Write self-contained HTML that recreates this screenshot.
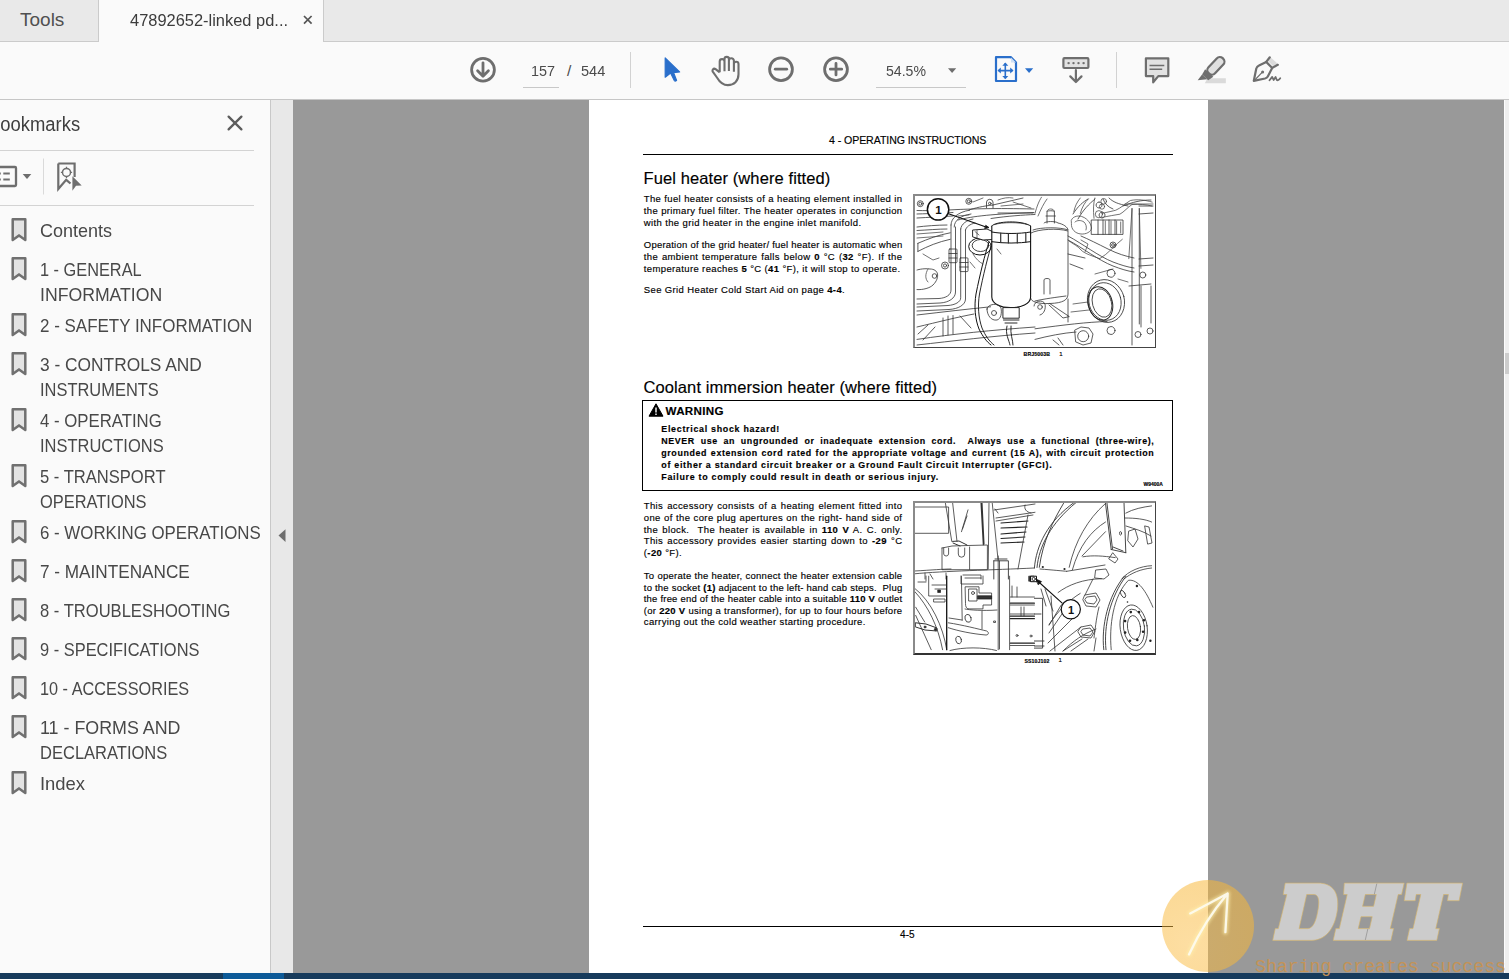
<!DOCTYPE html>
<html><head><meta charset="utf-8">
<style>
*{box-sizing:border-box;margin:0;padding:0}
html,body{width:1509px;height:979px;overflow:hidden;background:#999;font-family:"Liberation Sans",sans-serif}
.a{position:absolute}
#tabbar{left:0;top:0;width:1509px;height:42px;background:#e9e9e9;border-bottom:1px solid #cbcbcb}
#tools{left:0;top:0;width:99px;height:42px;border-right:1px solid #cbcbcb;border-bottom:1px solid #cbcbcb;background:#e9e9e9}
#tab{left:99px;top:0;width:225px;height:42px;background:#fafafa;border-right:1px solid #cbcbcb}
#toolbar{left:0;top:42px;width:1509px;height:58px;background:#fafafa;border-bottom:1px solid #c6c6c6}
#panel{left:0;top:100px;width:271px;height:873px;background:#fafafa;border-right:1px solid #c8c8c8}
#strip{left:271px;top:100px;width:22px;height:873px;background:#e8e8e8}
#doc{left:293px;top:100px;width:1211px;height:873px;background:#999}
#vscroll{left:1504px;top:100px;width:5px;height:873px;background:#efefef;border-left:1px solid #fdfdfd}
#taskbar{left:0;top:973px;width:1509px;height:6px;background:#173b5c}
#page{left:589px;top:100px;width:619px;height:873px;background:#fff}
.ui{color:#4b4b4b;font-family:"Liberation Sans",sans-serif;white-space:nowrap}
.bm{position:absolute;left:40px;font-size:17.7px;color:#484848;line-height:normal;white-space:nowrap;transform-origin:0 0}
.bmi{position:absolute;left:11px;width:16px;height:24px}
.pt{position:absolute;font-family:"Liberation Sans",sans-serif;color:#000;white-space:nowrap;-webkit-text-stroke:0.15px #000}
</style></head>
<body>
<div id="tabbar" class="a"></div>
<div id="tools" class="a"><span class="a ui" style="left:20px;top:8.6px;font-size:19px;color:#505050">Tools</span></div>
<div id="tab" class="a"><span class="a ui" style="left:31px;top:10.8px;font-size:16.6px;color:#3c3c3c;transform:scaleX(0.99);transform-origin:0 0">47892652-linked pd...</span>
<svg class="a" style="left:203.5px;top:14.8px" width="10" height="10" viewBox="0 0 10 10"><path d="M1 1L8.6 8.6M8.6 1L1 8.6" stroke="#555" stroke-width="1.7"/></svg></div>
<div id="toolbar" class="a"></div>
<span class="a ui" style="left:531px;top:62px;font-size:15.5px;color:#4b4b4b;transform:scaleX(0.93);transform-origin:0 0">157</span>
<span class="a ui" style="left:567px;top:62px;font-size:15.5px;color:#4b4b4b">/</span>
<span class="a ui" style="left:581.3px;top:62px;font-size:15.5px;color:#4b4b4b;transform:scaleX(0.94);transform-origin:0 0">544</span>
<span class="a ui" style="left:886px;top:62px;font-size:15.5px;color:#4b4b4b;transform:scaleX(0.91);transform-origin:0 0">54.5%</span>
<svg class="a" style="left:0;top:0" width="1509" height="100" viewBox="0 0 1509 100">
<g fill="none" stroke="#6e6e6e" stroke-width="2.8" stroke-linecap="round" stroke-linejoin="round">
<circle cx="483" cy="69.8" r="11.4"/>
<path d="M483 62.8V75.8M477.6 70.8L483 76.2L488.4 70.8"/>
<circle cx="781" cy="69.2" r="11.4"/>
<path d="M775.3 69.2H786.7"/>
<circle cx="836" cy="69.2" r="11.4"/>
<path d="M830.3 69.2H841.7M836 63.5V74.9"/>
</g>
<path d="M630.5 52V88M1116.5 52V88" stroke="#d2d2d2" stroke-width="1"/>
<path d="M523 87.5H559M876 87.5H966" stroke="#c8c8c8" stroke-width="1"/>
<path d="M665.2 58 L665.2 77.2 L670.6 73 L674.3 80.6 Q675.3 81.6 676.6 80.4 L673.6 72.6 L679.6 72 Z" fill="#2a6fcb" stroke="#2a6fcb" stroke-width="1.2" stroke-linejoin="round"/>
<path transform="translate(712,56.8)" d="M7.7 15.5V4.7A2.4 2.4 0 0 1 12.5 4.7V14.5M12.5 4.7V2.3A2.2 2.2 0 0 1 16.9 2.3V14.3M16.9 4A2.5 2.5 0 0 1 21.9 4V15M21.9 7.3A2.3 2.3 0 0 1 26.5 7.3V17.5C26.5 24.3 22 28.3 15.8 28.3C10.5 28.3 7.5 25 5.3 21.2L1.3 15.6A1.9 1.9 0 0 1 3.6 12.4L7.7 15.5" fill="none" stroke="#6e6e6e" stroke-width="2.1" stroke-linejoin="round"/>
<path d="M948 68.3H956.2L952.1 73Z" fill="#6e6e6e"/>
<path d="M1025 68.3H1033.2L1029.1 73Z" fill="#2a6fcb"/>
<g stroke="#2a6fcb" stroke-width="2.2" fill="none" stroke-linejoin="round">
<path d="M996 57.2H1011L1016 62.5V81H996Z"/>
</g>
<path d="M1011 57.5V62.5H1016Z" fill="#cfe0f5"/>
<g stroke="#2a6fcb" stroke-width="1.6" fill="none">
<path d="M998.5 70.6H1012.5M1005.3 63.2V78.3"/>
</g>
<g fill="#2a6fcb">
<path d="M997.5 70.6L1000.8 67.6V73.6Z"/><path d="M1013.5 70.6L1010.2 67.6V73.6Z"/>
<path d="M1005.3 62.4L1002.3 65.7H1008.3Z"/><path d="M1005.3 79.2L1002.3 75.9H1008.3Z"/>
</g>
<rect x="1063.4" y="58.2" width="25" height="9.8" fill="#e2e2e2" stroke="#6e6e6e" stroke-width="2.2" rx="1"/>
<g fill="#6e6e6e"><circle cx="1068.6" cy="63.1" r="1.2"/><circle cx="1073.5" cy="63.1" r="1.2"/><circle cx="1078.5" cy="63.1" r="1.2"/><circle cx="1083.6" cy="63.1" r="1.2"/></g>
<path d="M1075.9 70.2V81.8M1070.3 76.4L1075.9 82L1081.5 76.4" fill="none" stroke="#6e6e6e" stroke-width="2.2" stroke-linecap="round" stroke-linejoin="round"/>
<path d="M1145.9 58.3H1168.3V76.1H1158.3L1153.2 82.3V76.1H1145.9Z" fill="#e2e2e2" stroke="#6e6e6e" stroke-width="2.2" stroke-linejoin="round"/>
<path d="M1149.5 65.4H1164.3M1149.5 69.3H1162.2" stroke="#6e6e6e" stroke-width="1.5"/>
<path d="M1207.5 78.3H1225.8V83.3H1204.8Z" fill="#dadada"/>
<g transform="translate(1207.2,75.2) rotate(43)">
<rect x="-4.5" y="-23" width="9" height="20.5" rx="4.2" fill="#e0e0e0" stroke="#6e6e6e" stroke-width="2.2"/>
<path d="M-5.6 -3H5.6L4.2 3H-4.2Z" fill="#6e6e6e"/>
<path d="M-4.2 3L2.8 3L-3.5 10.2Z" fill="#6e6e6e"/>
</g>
<path d="M1270.5 57.3L1278.6 64.5L1275 68L1267 60Z" fill="#dcdcdc"/>
<g fill="none" stroke="#6e6e6e" stroke-width="2.2" stroke-linejoin="round" stroke-linecap="round">
<path d="M1253.8 80.8L1256.3 68.5Q1257 66.5 1259 65.6L1266.2 61.9L1272.2 67.9L1267.8 76.5Q1267 78 1265 78.5Z"/>
<path d="M1266.2 61.9L1269.8 57.3M1272.2 67.9L1277.8 64.8"/>
<path d="M1254.8 80L1262.6 71.9" stroke-width="1.2"/>
<path d="M1269.5 80.3L1272.2 76.9L1273.6 80L1275.6 77L1276.8 80Q1278.2 81 1280.2 78.2" stroke-width="1.8"/>
</g>
<circle cx="1262.6" cy="71.9" r="1.5" fill="#6e6e6e"/>
</svg>
<div id="panel" class="a"></div>
<div id="strip" class="a"></div>
<div class="a" style="left:0;top:100px;width:271px;height:873px;overflow:hidden">
<span class="a" style="left:-12.4px;top:12.9px;font-size:19.4px;color:#3f3f3f;white-space:nowrap;line-height:normal;transform:scaleX(0.95);transform-origin:0 0">Bookmarks</span>
</div>
<svg class="a" style="left:0;top:100px" width="271" height="120" viewBox="0 100 271 120">
<path d="M228.6 116.6L241.4 129.4M241.4 116.6L228.6 129.4" stroke="#5c5c5c" stroke-width="2.3" stroke-linecap="round"/>
<path d="M0 150.5H254M0 205.5H254" stroke="#d3d3d3" stroke-width="1"/>
<path d="M43.5 158.5V194.5" stroke="#dadada" stroke-width="1"/>
<rect x="-6" y="167" width="22" height="19" fill="none" stroke="#6e6e6e" stroke-width="2.3" rx="1"/>
<path d="M3.3 173.5H9.8M3.3 179.4H9.8" stroke="#6e6e6e" stroke-width="2"/>
<path d="M0 173.5H0.8M0 179.4H0.8" stroke="#6e6e6e" stroke-width="2"/>
<path d="M22.7 174.1H31.3L27 178.9Z" fill="#6e6e6e"/>
<path d="M58.3 163.5H74.6V177M70.5 183.5L66.2 179.8L58.3 189V163.5" fill="none" stroke="#6e6e6e" stroke-width="2.2" stroke-linejoin="miter"/>
<circle cx="66.5" cy="172.4" r="4" fill="none" stroke="#6e6e6e" stroke-width="1.5"/>
<path d="M66.5 166.8V168.6M66.5 176.2V178M60.9 172.4H62.7M70.3 172.4H72.1" stroke="#6e6e6e" stroke-width="1.3"/>
<path d="M72.4 176.2L81.7 185.6L76 185.8L72.4 190.8Z" fill="#6e6e6e"/>
</svg>
<span class="bm" style="top:220.7px;transform:scaleX(1.018)">Contents</span>
<svg class="a" style="left:10px;top:217.8px" width="18" height="25" viewBox="0 0 18 25"><path d="M2.7 1.3H15.3V22L9 17.4L2.7 22Z" fill="#e3e3e3" stroke="#707070" stroke-width="2.5" stroke-linejoin="round"/></svg>
<span class="bm" style="top:259.7px;transform:scaleX(0.923)">1 - GENERAL</span>
<svg class="a" style="left:10px;top:256.8px" width="18" height="25" viewBox="0 0 18 25"><path d="M2.7 1.3H15.3V22L9 17.4L2.7 22Z" fill="#e3e3e3" stroke="#707070" stroke-width="2.5" stroke-linejoin="round"/></svg>
<span class="bm" style="top:284.7px;transform:scaleX(0.998)">INFORMATION</span>
<span class="bm" style="top:315.7px;transform:scaleX(0.959)">2 - SAFETY INFORMATION</span>
<svg class="a" style="left:10px;top:312.8px" width="18" height="25" viewBox="0 0 18 25"><path d="M2.7 1.3H15.3V22L9 17.4L2.7 22Z" fill="#e3e3e3" stroke="#707070" stroke-width="2.5" stroke-linejoin="round"/></svg>
<span class="bm" style="top:354.7px;transform:scaleX(0.98)">3 - CONTROLS AND</span>
<svg class="a" style="left:10px;top:351.8px" width="18" height="25" viewBox="0 0 18 25"><path d="M2.7 1.3H15.3V22L9 17.4L2.7 22Z" fill="#e3e3e3" stroke="#707070" stroke-width="2.5" stroke-linejoin="round"/></svg>
<span class="bm" style="top:379.7px;transform:scaleX(0.93)">INSTRUMENTS</span>
<span class="bm" style="top:410.7px;transform:scaleX(0.948)">4 - OPERATING</span>
<svg class="a" style="left:10px;top:407.8px" width="18" height="25" viewBox="0 0 18 25"><path d="M2.7 1.3H15.3V22L9 17.4L2.7 22Z" fill="#e3e3e3" stroke="#707070" stroke-width="2.5" stroke-linejoin="round"/></svg>
<span class="bm" style="top:435.7px;transform:scaleX(0.932)">INSTRUCTIONS</span>
<span class="bm" style="top:466.7px;transform:scaleX(0.937)">5 - TRANSPORT</span>
<svg class="a" style="left:10px;top:463.8px" width="18" height="25" viewBox="0 0 18 25"><path d="M2.7 1.3H15.3V22L9 17.4L2.7 22Z" fill="#e3e3e3" stroke="#707070" stroke-width="2.5" stroke-linejoin="round"/></svg>
<span class="bm" style="top:491.7px;transform:scaleX(0.929)">OPERATIONS</span>
<span class="bm" style="top:522.7px;transform:scaleX(0.953)">6 - WORKING OPERATIONS</span>
<svg class="a" style="left:10px;top:519.8px" width="18" height="25" viewBox="0 0 18 25"><path d="M2.7 1.3H15.3V22L9 17.4L2.7 22Z" fill="#e3e3e3" stroke="#707070" stroke-width="2.5" stroke-linejoin="round"/></svg>
<span class="bm" style="top:561.7px;transform:scaleX(0.971)">7 - MAINTENANCE</span>
<svg class="a" style="left:10px;top:558.8px" width="18" height="25" viewBox="0 0 18 25"><path d="M2.7 1.3H15.3V22L9 17.4L2.7 22Z" fill="#e3e3e3" stroke="#707070" stroke-width="2.5" stroke-linejoin="round"/></svg>
<span class="bm" style="top:600.7px;transform:scaleX(0.937)">8 - TROUBLESHOOTING</span>
<svg class="a" style="left:10px;top:597.8px" width="18" height="25" viewBox="0 0 18 25"><path d="M2.7 1.3H15.3V22L9 17.4L2.7 22Z" fill="#e3e3e3" stroke="#707070" stroke-width="2.5" stroke-linejoin="round"/></svg>
<span class="bm" style="top:639.7px;transform:scaleX(0.929)">9 - SPECIFICATIONS</span>
<svg class="a" style="left:10px;top:636.8px" width="18" height="25" viewBox="0 0 18 25"><path d="M2.7 1.3H15.3V22L9 17.4L2.7 22Z" fill="#e3e3e3" stroke="#707070" stroke-width="2.5" stroke-linejoin="round"/></svg>
<span class="bm" style="top:678.7px;transform:scaleX(0.92)">10 - ACCESSORIES</span>
<svg class="a" style="left:10px;top:675.8px" width="18" height="25" viewBox="0 0 18 25"><path d="M2.7 1.3H15.3V22L9 17.4L2.7 22Z" fill="#e3e3e3" stroke="#707070" stroke-width="2.5" stroke-linejoin="round"/></svg>
<span class="bm" style="top:717.7px;transform:scaleX(1.009)">11 - FORMS AND</span>
<svg class="a" style="left:10px;top:714.8px" width="18" height="25" viewBox="0 0 18 25"><path d="M2.7 1.3H15.3V22L9 17.4L2.7 22Z" fill="#e3e3e3" stroke="#707070" stroke-width="2.5" stroke-linejoin="round"/></svg>
<span class="bm" style="top:742.7px;transform:scaleX(0.934)">DECLARATIONS</span>
<span class="bm" style="top:773.7px;transform:scaleX(1.042)">Index</span>
<svg class="a" style="left:10px;top:770.8px" width="18" height="25" viewBox="0 0 18 25"><path d="M2.7 1.3H15.3V22L9 17.4L2.7 22Z" fill="#e3e3e3" stroke="#707070" stroke-width="2.5" stroke-linejoin="round"/></svg>
<svg class="a" style="left:277px;top:528px" width="10" height="16" viewBox="0 0 10 16"><path d="M1.5 7.6L8.5 1.2V14Z" fill="#6e6e6e"/></svg>

<div id="doc" class="a"></div>
<div id="vscroll" class="a"></div><div class="a" style="left:1505px;top:353px;width:4px;height:21px;background:#cdcdcd"></div>
<div id="page" class="a"></div>
<div class="pt" style="left:829px;top:133.53px;font-size:10.6px;letter-spacing:-0.08px;line-height:12px">4 - OPERATING INSTRUCTIONS</div>
<div class="a" style="left:643px;top:154px;width:530px;height:1.2px;background:#000"></div>
<div class="pt" style="left:643.5px;top:168.28px;font-size:16.5px;letter-spacing:0.1px;line-height:20px">Fuel heater (where fitted)</div>
<div class="pt" style="left:643.8px;top:192.71px;font-size:9.5px;letter-spacing:0.350px;line-height:12px;width:258.6px;text-align:justify;text-align-last:justify">The fuel heater consists of a heating element installed in</div>
<div class="pt" style="left:643.8px;top:204.71px;font-size:9.5px;letter-spacing:0.347px;line-height:12px;width:258.6px;text-align:justify;text-align-last:justify">the primary fuel filter. The heater operates in conjunction</div>
<div class="pt" style="left:643.8px;top:216.71px;font-size:9.5px;letter-spacing:0.37px;line-height:12px">with the grid heater in the engine inlet manifold.</div>
<div class="pt" style="left:643.8px;top:238.71px;font-size:9.5px;letter-spacing:0.210px;line-height:12px;width:258.6px;text-align:justify;text-align-last:justify">Operation of the grid heater/ fuel heater is automatic when</div>
<div class="pt" style="left:643.8px;top:250.71px;font-size:9.5px;letter-spacing:0.370px;line-height:12px;width:258.6px;text-align:justify;text-align-last:justify">the ambient temperature falls below <b>0</b> °C (<b>32</b> °F). If the</div>
<div class="pt" style="left:643.8px;top:262.71px;font-size:9.5px;letter-spacing:0.37px;line-height:12px">temperature reaches <b>5</b> °C (<b>41</b> °F), it will stop to operate.</div>
<div class="pt" style="left:643.8px;top:284.31px;font-size:9.5px;letter-spacing:0.37px;line-height:12px">See Grid Heater Cold Start Aid on page <b>4-4</b>.</div>
<div class="pt" style="left:643.8px;top:499.71px;font-size:9.5px;letter-spacing:0.370px;line-height:12px;width:258.6px;text-align:justify;text-align-last:justify">This accessory consists of a heating element fitted into</div>
<div class="pt" style="left:643.8px;top:511.71px;font-size:9.5px;letter-spacing:0.370px;line-height:12px;width:258.6px;text-align:justify;text-align-last:justify">one of the core plug apertures on the right- hand side of</div>
<div class="pt" style="left:643.8px;top:523.51px;font-size:9.5px;letter-spacing:0.370px;line-height:12px;width:258.6px;text-align:justify;text-align-last:justify">the block.&nbsp; The heater is available in <b>110 V</b> A. C. only.</div>
<div class="pt" style="left:643.8px;top:535.21px;font-size:9.5px;letter-spacing:0.370px;line-height:12px;width:258.6px;text-align:justify;text-align-last:justify">This accessory provides easier starting down to <b>-29</b> °C</div>
<div class="pt" style="left:643.8px;top:547.01px;font-size:9.5px;letter-spacing:0.37px;line-height:12px">(<b>-20</b> °F).</div>
<div class="pt" style="left:643.8px;top:570.21px;font-size:9.5px;letter-spacing:0.264px;line-height:12px;width:258.6px;text-align:justify;text-align-last:justify">To operate the heater, connect the heater extension cable</div>
<div class="pt" style="left:643.8px;top:581.71px;font-size:9.5px;letter-spacing:0.194px;line-height:12px;width:258.6px;text-align:justify;text-align-last:justify">to the socket <b>(1)</b> adjacent to the left- hand cab steps.&nbsp; Plug</div>
<div class="pt" style="left:643.8px;top:593.21px;font-size:9.5px;letter-spacing:0.187px;line-height:12px;width:258.6px;text-align:justify;text-align-last:justify">the free end of the heater cable into a suitable <b>110 V</b> outlet</div>
<div class="pt" style="left:643.8px;top:604.71px;font-size:9.5px;letter-spacing:0.264px;line-height:12px;width:258.6px;text-align:justify;text-align-last:justify">(or <b>220 V</b> using a transformer), for up to four hours before</div>
<div class="pt" style="left:643.8px;top:616.31px;font-size:9.5px;letter-spacing:0.37px;line-height:12px">carrying out the cold weather starting procedure.</div>
<div class="pt" style="left:643.5px;top:377.28px;font-size:16.5px;letter-spacing:0.1px;line-height:20px">Coolant immersion heater (where fitted)</div>
<div class="a" style="left:642.4px;top:400.3px;width:531px;height:191px;border:1.3px solid #000;height:91.2px"></div>
<svg class="a" style="left:648px;top:402.5px" width="16" height="14" viewBox="0 0 16 14"><path d="M8 0.8L15 13.2H1Z" fill="#000" stroke="#000" stroke-width="1" stroke-linejoin="round"/><path d="M8 4.6V9.4M8 10.6V12" stroke="#fff" stroke-width="1.4"/></svg>
<div class="pt" style="left:665.6px;top:403.78px;font-size:11.6px;letter-spacing:0.3px;line-height:14px;font-weight:bold">WARNING</div>
<div class="pt" style="left:661.3px;top:422.72px;font-size:8.9px;letter-spacing:0.71px;line-height:12px;font-weight:bold">Electrical shock hazard!</div>
<div class="pt" style="left:661.3px;top:434.82px;font-size:8.9px;letter-spacing:0.600px;line-height:12px;width:493px;font-weight:bold;text-align:justify;text-align-last:justify">NEVER use an ungrounded or inadequate extension cord.&nbsp; Always use a functional (three-wire),</div>
<div class="pt" style="left:661.3px;top:446.72px;font-size:8.9px;letter-spacing:0.600px;line-height:12px;width:493px;font-weight:bold;text-align:justify;text-align-last:justify">grounded extension cord rated for the appropriate voltage and current (15 A), with circuit protection</div>
<div class="pt" style="left:661.3px;top:458.72px;font-size:8.9px;letter-spacing:0.71px;line-height:12px;font-weight:bold">of either a standard circuit breaker or a Ground Fault Circuit Interrupter (GFCI).</div>
<div class="pt" style="left:661.3px;top:470.82px;font-size:8.9px;letter-spacing:0.71px;line-height:12px;font-weight:bold">Failure to comply could result in death or serious injury.</div>
<div class="pt" style="left:1143.5px;top:481px;font-size:5px;font-weight:bold;line-height:6px;letter-spacing:0">W9400A</div>
<div class="pt" style="left:1023.6px;top:351.2px;font-size:5.2px;font-weight:bold;line-height:6px;letter-spacing:0.1px">BRJ5003B</div>
<div class="pt" style="left:1059.2px;top:351px;font-size:6px;line-height:7px">1</div>
<div class="pt" style="left:1024.5px;top:657.5px;font-size:5.2px;font-weight:bold;line-height:6px;letter-spacing:0.1px">SS10J102</div>
<div class="pt" style="left:1058.4px;top:657.2px;font-size:6px;line-height:7px">1</div>
<div class="a" style="left:643px;top:925.8px;width:530px;height:1.2px;background:#000"></div>
<div class="pt" style="left:900px;top:928.53px;font-size:10px;letter-spacing:0.1px;line-height:12px">4-5</div>
<div id="img1" class="a" style="left:913px;top:194px;width:243px;height:154px;border-left:2px solid #8a8a8a;border-top:2px solid #8a8a8a;border-right:1.6px solid #444;border-bottom:1.6px solid #444"><svg class="a" style="left:0;top:0" width="241" height="151" viewBox="2 2 241 151">
<g fill="none" stroke="#333" stroke-width="0.8" stroke-linecap="round" stroke-linejoin="round">
<!-- top manifold lines -->
<path d="M4 16.5C20 17 35 16 45 15.5C60 15 80 14 121 15M4 20C20 19.5 32 19 40 18.5"/>
<path d="M4 24C15 23.5 28 22.5 40 22M4 33C12 32 25 31 34 31M4 36.5C15 36 25 35 34 35"/>
<path d="M45 26C60 22 80 20 121 18.5M56 16C62 14 70 12 80 11M80 11C90 9 100 6 110 4"/>
<path d="M78 24.5C95 22 110 21 122 20.5M85 19L120 19"/>
<path d="M4.9 49.3C15 45 25 41 37.2 38.8M4.9 57.4C15 52 25 48 37.2 45.3M4.9 49.3V57.4"/>
<!-- pipes -->
<path d="M38 31C38 24 45 18 56.6 16.2M41.2 33C41.2 26 48 21.5 58 20"/>
<path d="M38 31V96C38 101 33 104 26 104.5L4 105M42.5 33V98C42.5 104 36 108.5 27 109L4 110"/>
<path d="M47.7 35V103.8C47.7 108 42 111 35 111.5L4 113M52.5 36V105C52.5 111 45 115 36 115.5L4 117"/>
<path d="M47.7 35C48 30 54 26 60 25M52.5 36C53 33 57 30 62 29"/>
<rect x="36" y="55" width="8" height="13.7" rx="0.8"/>
<path d="M36 59.5H44M36 64H44"/>
<rect x="46.9" y="63.9" width="8.1" height="13.7" rx="0.8"/>
<path d="M46.9 68.5H55M46.9 73H55"/>
<!-- bolts -->
<circle cx="7.3" cy="9.7" r="3"/><circle cx="7.3" cy="9.7" r="1.5"/>
<circle cx="55.8" cy="7.3" r="3"/><circle cx="55.8" cy="7.3" r="1.5"/>
<path d="M73.5 14V8A3.3 3.3 0 0 1 80 8V14"/><circle cx="76.8" cy="9.5" r="1.3"/>
<circle cx="32" cy="71.5" r="3.5"/><circle cx="32" cy="71.5" r="1.6"/>
<!-- left oval hole -->
<path d="M4 95.6C10 96 17 94 20 91C24 87 25 83 24.5 80C24 77 21 75 17 75C10 74 4 76 4 76"/>
<circle cx="21.5" cy="82" r="2.3"/>
<!-- engine lines bottom left -->
<path d="M4 121C30 118 55 115 77.6 112.8M4 133C25 128 45 123 61 120M4 145.4C40 140 80 136 122 133M4 151C40 147 80 142 122 139"/>
<path d="M30 124V142M35 122V141M40 121.5V140"/>
<path d="M5 140L15 131M10 146L22 133M47 122L58 134"/>
<!-- callout -->
<circle cx="25.1" cy="15.4" r="10.7" fill="#fff" stroke="#111" stroke-width="1.5"/><text x="22.2" y="19.6" font-family="Liberation Sans" font-weight="bold" font-size="11.5" fill="#111" stroke="none">1</text>
<path d="M35.6 19.8L73 33" stroke="#111" stroke-width="1.1"/>
<!-- loop cable -->
<ellipse cx="67" cy="52.5" rx="11.3" ry="8.5" stroke="#111" stroke-width="1"/>
<ellipse cx="67.5" cy="51.5" rx="8.3" ry="6" stroke="#111" stroke-width="0.8"/>
<path d="M60 36L74 35L82.5 39V45.3L70 46L60 43Z" fill="#fff" stroke="#111" stroke-width="0.9"/>
<path d="M62 37.5L66 41M64 36.5V44" stroke-width="0.7"/>
<!-- long cable -->
<path d="M76 48C72 60 67 80 63 100C61 112 62 125 66 135C70 143 74 148 78 151" stroke="#111" stroke-width="1"/>
<path d="M79 49C75 62 70 82 66.5 100C64.5 112 65.5 124 69 134C72.5 142 76 147 81 151" stroke="#111" stroke-width="0.9"/>
<!-- second canister -->
<path d="M118 39C125 35 145 34 155 37V100C155 106 150 109 137 109.5C125 110 118 108 117.6 104" fill="#fff"/>
<path d="M120 36C128 33 148 33 155 36" />
<path d="M134 29V17.5C134 16.5 141.4 16.5 141.4 17.5V29M133 22H142.4M131 29C132 27 143 27 145 29C150 30 155 33 155 36"/>
<!-- main canister -->
<path d="M78.8 32V103C79 110 88 113.6 97.2 113.6C108 113.6 117.6 110 117.6 103V32" fill="#fff" stroke="#111" stroke-width="1.1"/>
<path d="M78.8 38C90 40 106 40 117.6 38M78.8 47.7C90 49.5 106 49.5 117.6 47.7" stroke="#111" stroke-width="1"/>
<path d="M78.8 32C82 27 110 26 117.6 32" stroke="#111" stroke-width="1"/>
<path d="M82 30.5C88 28 108 28 114 30.5"/>
<path d="M87.7 39V48.5M95.4 39.5V49M104.3 39.5V49M112.8 39V48.5" stroke-width="1.2"/>
<path d="M73 31.5L76 33.6L72 34.5Z" fill="#111" stroke="#111"/>
<!-- drain -->
<rect x="90.3" y="113.6" width="15.9" height="10.6" fill="#fff" stroke="#111" stroke-width="0.9"/>
<path d="M90.5 126H106M92 129H104M94 132C92 140 96 146 97 151M98 132C97 140 100 146 100 151" stroke="#111" stroke-width="0.9"/>
<!-- bolts around drain -->
<path d="M74 115C74 110 86 108 88 114C89 119 88 125 84 126C78 127 74 121 74 115Z"/>
<circle cx="81" cy="119" r="2.5"/>
<path d="M121 112C121 107 130 105 132 110C133 115 131 120 127 121"/><circle cx="127" cy="113" r="2.3"/>
<!-- right big hose -->
<path d="M155 42C170 50 185 62 200 68C208 71 214 73 221 74M155 46C170 54 185 66 200 72C208 75 214 77 221 78"/>
<!-- mid top fittings -->
<path d="M178.6 26H210V40.4H178.6ZM185 26V40.4M190 26V40.4M196 26V40.4M202 26V40.4"/>
<path d="M160 20C165 12 170 8 175 5M165 25C170 16 176 10 182 5M190 5C192 10 195 13 200 15M196 4C200 8 205 10 215 12M210 12C220 8 228 6 238 6"/>
<path d="M186 8A3 3 0 1 0 186.1 8M189 18A3 3 0 1 0 189.1 18"/>
<path d="M168 42C175 45 185 50 195 55C205 60 212 62 221 64"/>
<path d="M155 60L172 64M157 70L170 75"/>
<circle cx="200" cy="51" r="3"/><circle cx="200" cy="51" r="1.4"/>
<!-- right block -->
<path d="M219 14.6V151M226.3 14.6V130M238 92V129M228 92V133M216 92L238 90"/>
<path d="M226 12L240 12M226 20L240 19M226 65L240 64M226 72L240 71"/>
<g fill="none" stroke="#444" stroke-width="0.75" stroke-linecap="round">
<path d="M160.8 17.8C162 12 164 8 167.3 4M167.3 19.4C169 13 172 8 175.4 4.9M181 24.3C180 16 180.5 9 181.8 4"/>
<circle cx="190.7" cy="7.3" r="2.8"/><circle cx="189" cy="12.6" r="2.6"/><circle cx="185.9" cy="20.2" r="3.6"/>
<path d="M189 19.4C195 18 200 17 202.8 16.2C208 14 213 9 217.4 6.5C225 5 232 6 239.2 8.1M189 23.4C196 22 202 21 206.9 20.2C211 18 215 13 219 10.5C226 10 233 10.5 239 12"/>
<path d="M158.4 26C160 22 166 21 170 23C175 25 178 30 178.6 34C178 38 173 40.4 168 40C162 39.5 158 35 158.4 30Z"/>
<path d="M162 28C164 26 168 26 171 28C173 30 174 33 173 36"/>
<path d="M192.3 27V40M198 27V40.4M203.6 27V40.4M207.7 28V39"/>
<path d="M219 14.6L215.8 64.7M226.3 14.6L227.9 74.4M212 10L240 10"/>
<path d="M156 47C160 50 165 52 168 56C172 60 180 62 186.7 64.7M168 46L175 50L172 58M186.7 64.7C195 60 203 50 209.3 45.3"/>
<path d="M122 19.4C124 12 126 7 128.5 3.2M125 22C128 15 131 9 134 5"/>
<path d="M134 17.5C134 14 141.4 14 141.4 17.5"/>
<path d="M4 40L30 38M4 44L30 42M45 22L56 21"/>
<path d="M60 8L70 4M85 6C90 4 95 3 100 4M88 12L110 10M100 8L118 14"/>
<path d="M60 60C63 65 66 68 70 70M57 68L62 74M84 55L88 60"/>
<path d="M10 60L20 66L26 64M15 75C12 80 12 85 15 88"/>
<path d="M160 110L175 108M158 118L176 116M182 80L200 75M205 85L215 88"/>
</g>
<!-- ring -->
<ellipse cx="193" cy="107" rx="18.4" ry="21.6" transform="rotate(-15 193 107)"/>
<ellipse cx="192" cy="107.5" rx="16" ry="19" transform="rotate(-15 192 107.5)"/>
<ellipse cx="187.4" cy="109.5" rx="12" ry="17" transform="rotate(-15 187.4 109.5)" stroke="#222" stroke-width="1"/>
<ellipse cx="189" cy="109" rx="9.5" ry="14.5" transform="rotate(-15 189 109)"/>
<!-- hex nut bottom -->
<path d="M162 136L168 133L176 134L180 140L178 149L170 151L163 148Z"/>
<circle cx="170.2" cy="142.2" r="5.5"/>
<circle cx="198" cy="136.5" r="4"/><circle cx="198" cy="79.3" r="4"/><circle cx="229.8" cy="81" r="3"/><circle cx="237" cy="137" r="3"/><circle cx="225" cy="140.5" r="3"/>
<path d="M136.7 109.5L156.3 122.6L150 124L136 111M122 134.8C150 131 175 128 194 127.5M122 145.4C135 142 150 139 163 138"/>
<path d="M122 107C130 105 145 103 153 102M155 105V128"/>
<path d="M131 100V86C131 84 137 84 137 86V100"/>
<path d="M145 144L150 151M140 146L146 151"/>
</g>
</svg>
</div>
<div id="img2" class="a" style="left:913px;top:501px;width:243px;height:154px;border-left:2px solid #8a8a8a;border-top:2px solid #8a8a8a;border-right:1.6px solid #444;border-bottom:2.2px solid #333"><svg class="a" style="left:0;top:0" width="239" height="150" viewBox="2 2 239 150">
<g fill="none" stroke="#333" stroke-width="0.8" stroke-linecap="round" stroke-linejoin="round">
<!-- window -->
<path d="M2 6H35.6V32.3H2"/>
<path d="M32.3 1.6L38.8 40.4M39.6 1.6L44 40.4M48.5 30.7L55 8.9M49.5 28L54 15"/>
<path d="M68 1.6L70.3 43.7M69 1.6L71 43" stroke-width="1.1"/>
<path d="M76 1.6L75.2 68M79.2 1.6L85 58.2M82 8L85 12"/>
<!-- battery box -->
<path d="M29 47L39 45L55 44.5L74.4 44V68.7H56.6M29 47V68.7H56.6V46"/>
<path d="M39.6 40.4L46 40L54 44M40 42L47 45" stroke-width="1"/>
<path d="M30.7 47V53A2.5 2.5 0 0 0 35.6 53V47M45.3 47V53A3.2 3.2 0 0 0 51.7 53V47"/>
<!-- grille -->
<path d="M83 17L122 11.3M81 9L122 3M83 20L120 14"/>
<path d="M88 22L115 20M88 27L114 26M88 33L113 31M88 37.5L112 36M88 42L111 41" stroke="#222" stroke-width="1.1"/>
<path d="M115 14L105 68"/>
<path d="M112 4C111 8 113 11 118 12"/>
<!-- horizontal floor -->
<path d="M1.6 72.8C30 70 80 69 121.4 67M1.6 70C20 69 30 68 38 68"/>
<path d="M80.8 59.8H95.4V78M80.8 59.8V78M82 58L94 58" stroke-width="0.9"/>
<path d="M12 72V78M17 73L20 78M33 72V78M50 74H68V78"/>
<!-- fender -->
<path d="M121.4 67C123 45 135 20 161 1.6M124 66.5C126 45 138 22 163 1.6M126.3 66.3C130 40 140 20 150.5 2.4" stroke-width="0.9"/>
<path d="M156.2 66.3C162 40 175 18 191.7 3.2M159.4 68.7C166 45 178 30 192.5 21M169 55L192.5 30.7M169.9 55.8C180 54 190 55 202.2 56.6"/>
<path d="M127 68C140 69 150 70 153.7 70.3M153.7 70.3L192 64"/>
<!-- post -->
<path d="M192.5 2.4L198.2 48.5M194 2.4L199.5 48M211 1.6L212.8 51.7M198.2 48.5L212.8 51.7M200 46L210 50" stroke-width="0.9"/>
<ellipse cx="207.5" cy="32.3" rx="1" ry="1.8"/>
<path d="M212.8 12.1C220 8 230 6 238.6 4.9M212 17C222 17 232 18 238.6 21M213 25C222 28 230 30 238 35"/>
<path d="M216 30L222 28L225 38L220 46L215 40Z"/><path d="M232 25L236 26L239 42L235 43Z"/>
<path d="M200 52L205 58L202 62L196 58Z"/>
<!-- tire lugs -->
<path d="M183 69L193 68L196 74L191 78L182 77Z"/>
<path d="M172 94L183 92L187 99L183 106L173 105L170 99Z"/><path d="M174 96L182 95L184 99L181 103L174 102L172 99Z"/>
<path d="M168 126L178 124L182 130L178 137L168 136L165 131Z"/><path d="M170 128L177 127L180 131L177 135L170 134L168 131Z"/>
<path d="M208.7 78C215 70 228 65 238.6 64.7M211 78C218 72 228 68 238.6 67"/>
<!-- left tire -->
<path d="M1.9 87.5C18 100 30 125 33.7 148.7M1.9 90.7C15 105 25 125 29.6 148.7"/>
<path d="M2.7 106.2L11.7 121M2.7 114.4L18.2 148.7"/>
<path d="M2.7 121.8L13 123L24 127L23.9 130L12 129L2.7 126Z" stroke-width="1"/>
<circle cx="12" cy="126" r="1" fill="#222"/><circle cx="22.5" cy="128.5" r="1.2" fill="#222"/>
<!-- step edge -->
<path d="M33.7 75.2V148.7" stroke="#111" stroke-width="1.3"/>
<path d="M15.7 75.2V95H33.7M19 84H33M22 88H33M21 98H32V101H21Z"/>
<rect x="25" y="89" width="2.5" height="2.5" fill="#222"/>
<path d="M13 75V80M5 81H13"/>
<!-- central panel -->
<path d="M48.4 75.2L49.2 119.3M85.2 55V148.7M86.5 60V148M96.6 75.2V148.7"/>
<path d="M52.5 85.8H66V92H78.6V104H70V107.9H56C53 107.9 52.5 105 52.5 103Z"/>
<path d="M56 88H64V100H56Z"/><circle cx="60" cy="92" r="1.5"/>
<rect x="64.8" y="94.8" width="13.8" height="3.2" fill="#333" stroke="#222"/>
<path d="M52 108C56 109 70 110 84 109M69 110V128"/>
<path d="M35.3 121.8C50 124 65 128 73.7 130C76 131 76 134 73 134C60 133 45 130 35.3 126.7"/>
<ellipse cx="55" cy="117.3" rx="3" ry="4" transform="rotate(-15 55 117.3)"/>
<ellipse cx="45.6" cy="139" rx="2.8" ry="3.8" transform="rotate(-15 45.6 139)"/>
<path d="M37 149.5C50 146 70 146 83.5 149.5M36 117L49 119"/>
<path d="M48 75V83H70V75M52 77H68"/>
<rect x="81" y="120" width="1.5" height="1.5"/>
<!-- steps right -->
<path d="M97.4 102.2H121.4M97.4 115.2H121.4M97.4 117.7H121.4M97.4 142.2H121.4" stroke="#222" stroke-width="1.2"/>
<path d="M97.4 96H121.4M97.4 104H121.4M97.4 113H121.4M97.4 144.5H121.4M99 85V96M104 86V96M108 106V115M111 106V115"/>
<circle cx="104" cy="134.5" r="1"/><circle cx="118" cy="135" r="1"/>
<rect x="116" y="75.2" width="5" height="5" fill="#333"/>
<!-- right step part -->
<path d="M121.4 97.3H129.6V147.1H121.4M121.4 113H128M121.4 140H131M121.4 145H131" stroke-width="0.9"/>
<path d="M136.1 124.2L148.4 103.8M136 132L151 110M135 142L162 115M137 150L168 126M150 150L169 138M158 150L175 138M132 88L140 110M128 88L133 105"/>
<path d="M145.1 91.5C155 84 170 78 188.4 77.7M136.1 123.4C145 110 155 100 167.2 92.4M150 150C160 140 170 133 183 128"/>
<path d="M186 106C183 118 182 130 181 137M180 78L172 94M183 137L181 150M138 95L142 150"/>
<!-- arrow + callout -->
<path d="M123 78.5L149.2 102.2" stroke="#111" stroke-width="1.1"/>
<path d="M122.6 78L128.5 80.6L125.6 83.6Z" fill="#111" stroke="#111" stroke-width="0.8"/>
<circle cx="157.8" cy="108.3" r="9.6" fill="#fff" stroke="#111" stroke-width="1.2"/><text x="155" y="112.5" font-family="Liberation Sans" font-weight="bold" font-size="11" fill="#111" stroke="none">1</text>
<rect x="118" y="75.2" width="5.5" height="5.5" fill="#fff" stroke="#111" stroke-width="1"/>
<circle cx="120.7" cy="78" r="1.6" stroke="#111"/>
<!-- wheel -->
<path d="M190.8 148.7C188 125 195 95 211.3 75.2M193 148.7C190.5 125 197 96 213 75.2" stroke-width="0.9"/>
<path d="M198.2 148.7C196 125 200 95 215.4 79.3C225 78 233 90 239.9 106.2"/>
<ellipse cx="220.7" cy="126.7" rx="13.5" ry="22.9" transform="rotate(-8 220.7 126.7)"/>
<ellipse cx="221" cy="126.5" rx="10.5" ry="18.5" transform="rotate(-8 221 126.5)"/>
<ellipse cx="221" cy="126.5" rx="6.5" ry="12" transform="rotate(-8 221 126.5)"/>
<ellipse cx="210" cy="93" rx="2" ry="4" transform="rotate(-30 210 93)"/>
</g>
<g fill="#222">
<circle cx="217.8" cy="111.1" r="1.3"/><circle cx="226" cy="111.1" r="1.3"/><circle cx="230.9" cy="119.3" r="1.3"/><circle cx="230.1" cy="130.8" r="1.3"/><circle cx="224.3" cy="138.9" r="1.3"/><circle cx="217" cy="139.7" r="1.3"/><circle cx="212.1" cy="131.6" r="1.3"/><circle cx="212.1" cy="120.1" r="1.3"/>
<circle cx="223.9" cy="85" r="1.2"/><circle cx="237.4" cy="139.7" r="1.2"/><circle cx="129.8" cy="66" r="1.1"/><circle cx="151.5" cy="68" r="1.1"/><circle cx="214.5" cy="101" r="0.8"/>
</g>
</svg>
</div>
<div id="taskbar" class="a"></div><div class="a" style="left:223px;top:973px;width:61px;height:6px;background:#0c5a98"></div>
<svg class="a" style="left:1150px;top:870px" width="359" height="109" viewBox="1150 870 359 109">
<defs>
<radialGradient id="cg" cx="0.3" cy="0.7" r="0.9">
<stop offset="0" stop-color="#fbbd45" stop-opacity="0.5"/>
<stop offset="1" stop-color="#f7b636" stop-opacity="0.55"/>
</radialGradient>
<filter id="gl" x="-50%" y="-50%" width="200%" height="200%"><feGaussianBlur stdDeviation="1.6"/></filter>
</defs>
<circle cx="1208" cy="926" r="46" fill="url(#cg)"/>
<g fill="none" stroke-linecap="round" stroke-linejoin="round">
<path d="M1189 954.4Q1205 920 1227.7 893.5M1190.2 913.4L1227.7 893.5L1225.4 932.2" stroke="#fff3b0" stroke-width="5" opacity="0.6" filter="url(#gl)"/>
<path d="M1189 954.4Q1205 920 1227.7 893.5M1190.2 913.4L1227.7 893.5L1225.4 932.2" stroke="#fdfbf0" stroke-width="2.3" opacity="0.92"/>
</g>
<g fill="#cccccc" stroke="#d6b56c" stroke-width="0.65" fill-rule="evenodd">
<path d="M1285.2 883.1H1318C1333 883.1 1339.5 893 1337.4 909.8C1335.5 925 1328 940.4 1311 940.4H1272.7L1275.2 928.6H1278.3L1286.8 894.5H1283.2ZM1306.7 894.5H1313.8C1318 894.5 1319.6 899 1318.3 908C1316.5 921 1313 928.6 1307.5 928.6H1299.1Z"/>
<path d="M1344.3 883.1H1404.2L1401.6 894.5H1398.2L1390.3 928.6H1393.6L1390.9 940.4H1333.2L1335.8 928.6H1339.3L1347.2 894.5H1343.6ZM1365.3 894.5H1376.3L1373.6 906.3H1362.6ZM1361 916.7H1372.2L1369.5 928.6H1358.3Z"/>
<path d="M1406.9 883.1H1462.6L1459.1 900.7H1447.4L1448.4 894.5H1443.6L1435.8 928.6H1439.4L1436.8 940.4H1407L1409.6 928.6H1413L1420.8 894.5H1416.2L1415.2 900.7H1404.2Z"/>
</g>
<path d="M1376.8 883.6L1374.3 894.3M1367.8 929L1365.3 940" stroke="#9a9a9a" stroke-width="0.9"/>
<text x="1255" y="972" font-family="Liberation Mono" font-size="18.2" fill="#c49356">Sharing creates success</text>
</svg>
</body></html>
